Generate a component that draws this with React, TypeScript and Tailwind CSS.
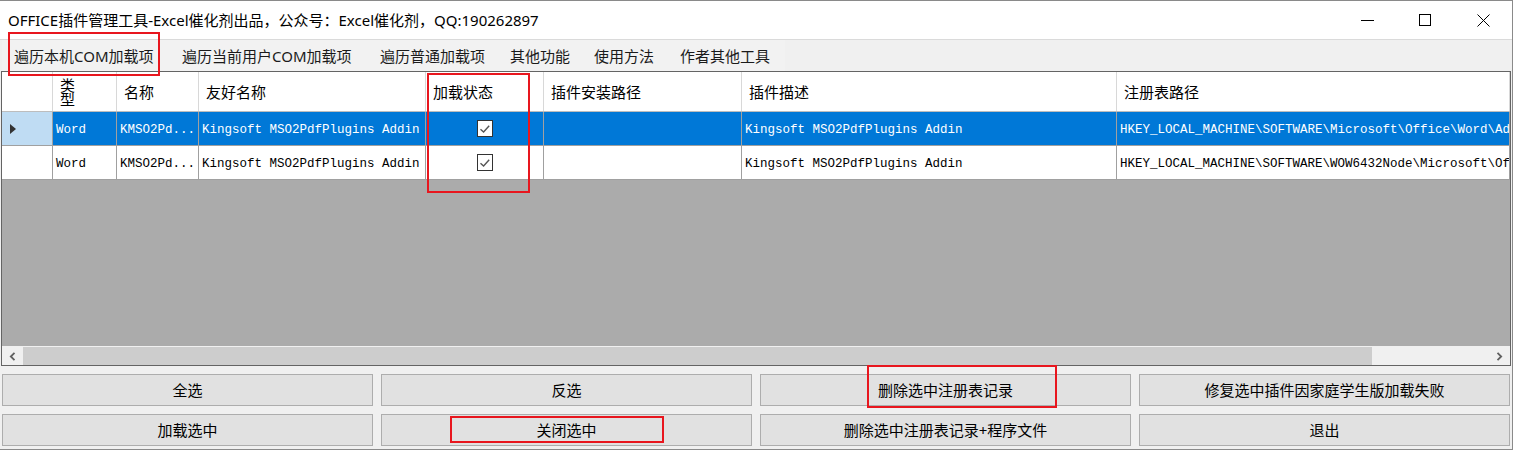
import React from "react";

const menus = [
  { label: "遍历本机COM加载项", w: "w-[168px]" },
  { label: "遍历当前用户COM加载项", w: "w-[198px]" },
  { label: "遍历普通加载项", w: "w-[130px]" },
  { label: "其他功能", w: "w-[84px]" },
  { label: "使用方法", w: "w-[86px]" },
  { label: "作者其他工具", w: "w-[117px]" },
];

const cols = [
  { key: "type", title: "类型", w: "w-[64px]" },
  { key: "name", title: "名称", w: "w-[82px]" },
  { key: "friendly", title: "友好名称", w: "w-[227px]" },
  { key: "status", title: "加载状态", w: "w-[118px]" },
  { key: "path", title: "插件安装路径", w: "w-[198px]" },
  { key: "desc", title: "插件描述", w: "w-[375px]" },
  { key: "reg", title: "注册表路径", w: "flex-1" },
];

const rows = [
  {
    type: "Word",
    name: "KMSO2Pd...",
    friendly: "Kingsoft MSO2PdfPlugins Addin",
    path: "",
    desc: "Kingsoft MSO2PdfPlugins Addin",
    reg: "HKEY_LOCAL_MACHINE\\SOFTWARE\\Microsoft\\Office\\Word\\Addins\\KMSO2PdfPlugins",
  },
  {
    type: "Word",
    name: "KMSO2Pd...",
    friendly: "Kingsoft MSO2PdfPlugins Addin",
    path: "",
    desc: "Kingsoft MSO2PdfPlugins Addin",
    reg: "HKEY_LOCAL_MACHINE\\SOFTWARE\\WOW6432Node\\Microsoft\\Office\\Word\\Addins",
  },
];

const buttons = [
  "全选",
  "反选",
  "删除选中注册表记录",
  "修复选中插件因家庭学生版加载失败",
  "加载选中",
  "关闭选中",
  "删除选中注册表记录+程序文件",
  "退出",
];

const CheckBox = () => (
  <div className="w-[16px] h-[17px] border border-[#333333] bg-white flex items-center justify-center">
    <svg width="14" height="14" viewBox="0 0 14 14">
      <path d="M2.5 7.2 L5.6 10 L11.2 3.8" fill="none" stroke="#555555" strokeWidth="1.4" />
    </svg>
  </div>
);

const App = () => {
  return (
    <div className="relative w-[1517px] h-[451px] bg-white overflow-hidden font-['Noto_Sans','Noto_Sans_CJK_SC',sans-serif] text-black">
      <div className="w-[1513px] h-[450px] border-t border-r border-b border-[#8a8a8a] flex flex-col bg-[#f0f0f0]">
        {/* title bar */}
        <div className="h-[38px] bg-white flex items-center">
          <div className="pl-[8px] text-[15px] leading-[20px] flex-1">
            OFFICE插件管理工具-Excel催化剂出品，公众号：Excel催化剂，QQ:190262897
          </div>
          <div className="flex h-full">
            <div className="w-[58px] flex items-center justify-center">
              <div className="w-[13px] h-px bg-black" />
            </div>
            <div className="w-[58px] flex items-center justify-center">
              <div className="w-[12px] h-[12px] border border-black" />
            </div>
            <div className="w-[58px] flex items-center justify-center">
              <svg width="13" height="13" viewBox="0 0 13 13">
                <path d="M0.5 0.5 L12.5 12.5 M12.5 0.5 L0.5 12.5" stroke="#000" strokeWidth="1" />
              </svg>
            </div>
          </div>
        </div>

        {/* menu strip */}
        <div className="h-[32px] border-t border-[#dadada] flex items-center pl-[2px]">
          <div className="flex h-full bg-[#f2f2f2]">
            {menus.map((m) => (
              <div key={m.label} className={`${m.w} px-[12px] flex items-center text-[15px] leading-[20px] text-[#1b1b1b] whitespace-nowrap`}>
                {m.label}
              </div>
            ))}
          </div>
        </div>

        {/* grid */}
        <div className="ml-px w-[1510px] h-[295px] border border-[#646464] flex flex-col bg-[#ababab]">
          <div className="h-[40px] flex bg-white border-b border-[#bdbdbd]">
            <div className="w-[51px] border-r border-[#d8d8d8]" />
            {cols.map((c) => (
              <div key={c.key} className={`${c.w} border-r border-[#d8d8d8] flex items-center pl-[7px] text-[15px] leading-[20px] overflow-hidden whitespace-nowrap`}>
                {c.key === "type" ? (
                  <div className="leading-[14px] text-[15px] flex flex-col">
                    <span>类</span>
                    <span>型</span>
                  </div>
                ) : (
                  c.title
                )}
              </div>
            ))}
          </div>
          {rows.map((r, i) => {
            const sel = i === 0;
            return (
              <div key={i} className="h-[34px] flex border-b border-[#a0a0a0] font-['Liberation_Mono',monospace] text-[12.5px]">
                <div className={`w-[51px] border-r border-[#a0a0a0] flex items-center pl-[8px] ${sel ? "bg-[#bfdcf3]" : "bg-white"}`}>
                  {sel && (
                    <svg width="7" height="10" viewBox="0 0 7 10">
                      <path d="M0 0 L6 5 L0 10 Z" fill="#333333" />
                    </svg>
                  )}
                </div>
                {cols.map((c) => (
                  <div
                    key={c.key}
                    className={`${c.w} border-r border-[#a0a0a0] flex items-center overflow-hidden whitespace-nowrap ${
                      c.key === "status" ? "justify-center" : "pl-[3px] pt-[3px]"
                    } ${sel ? "bg-[#0078d7] text-white" : "bg-white text-black"}`}
                  >
                    {c.key === "status" ? <CheckBox /> : (r as Record<string, string>)[c.key]}
                  </div>
                ))}
              </div>
            );
          })}
          <div className="flex-1" />
          {/* horizontal scrollbar */}
          <div className="h-[19px] border-t border-[#f0f0f0] bg-[#f0f0f0] flex">
            <div className="w-[21px] flex items-center justify-center">
              <svg width="7" height="9" viewBox="0 0 7 9">
                <path d="M5.5 0.8 L1.8 4.5 L5.5 8.2" fill="none" stroke="#606060" strokeWidth="1.8" />
              </svg>
            </div>
            <div className="flex-1 flex">
              <div className="w-[1349px] bg-[#cdcdcd]" />
            </div>
            <div className="w-[21px] flex items-center justify-center">
              <svg width="7" height="9" viewBox="0 0 7 9">
                <path d="M1.5 0.8 L5.2 4.5 L1.5 8.2" fill="none" stroke="#606060" strokeWidth="1.8" />
              </svg>
            </div>
          </div>
        </div>

        {/* buttons */}
        <div className="grid grid-cols-4 gap-[8px] px-[2px] pt-[8px]">
          {buttons.map((b) => (
            <div key={b} className="h-[32px] bg-[#e1e1e1] border border-[#adadad] flex items-center justify-center text-[15px] leading-[20px] text-black whitespace-nowrap">
              {b}
            </div>
          ))}
        </div>
      </div>

      {/* red annotation boxes */}
      <div className="absolute left-[8px] top-[32px] w-[152px] h-[44px] border-2 border-[#e8161e]" />
      <div className="absolute left-[427px] top-[73px] w-[103px] h-[120px] border-2 border-[#e8161e]" />
      <div className="absolute left-[867px] top-[365px] w-[190px] h-[43px] border-2 border-[#e8161e]" />
      <div className="absolute left-[450px] top-[416px] w-[214px] h-[27px] border-2 border-[#e8161e]" />
    </div>
  );
};

export default App;
